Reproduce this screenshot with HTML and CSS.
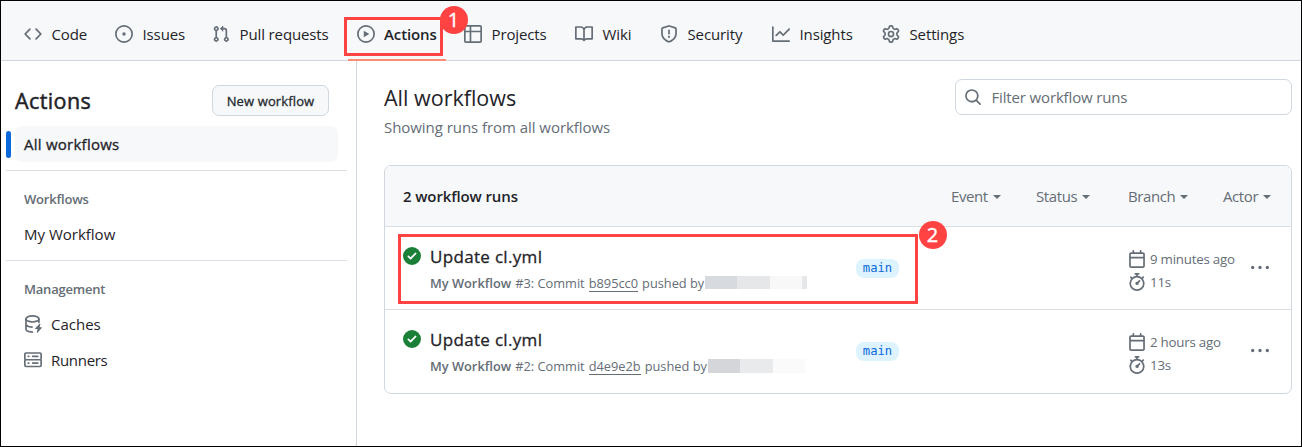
FILE: index.html
```html
<!DOCTYPE html>
<html lang="en">
<head>
<meta charset="utf-8">
<title>Actions</title>
<link rel="stylesheet" href="styles.css">
</head>
<body>
<svg class="defs" aria-hidden="true">
  <symbol id="code" viewBox="0 0 16 16"><path d="M4.72 3.22a.75.75 0 0 1 1.06 1.06L2.06 8l3.72 3.72a.75.75 0 1 1-1.06 1.06L.47 8.53a.75.75 0 0 1 0-1.06Zm6.56 0a.75.75 0 1 0-1.06 1.06L13.94 8l-3.72 3.72a.75.75 0 1 0 1.06 1.06l4.25-4.25a.75.75 0 0 0 0-1.06Z"/></symbol>
  <symbol id="issue" viewBox="0 0 16 16"><path d="M8 9.5a1.5 1.5 0 1 0 0-3 1.5 1.5 0 0 0 0 3Z"/><path d="M8 0a8 8 0 1 1 0 16A8 8 0 0 1 8 0ZM1.5 8a6.5 6.5 0 1 0 13 0 6.5 6.5 0 0 0-13 0Z"/></symbol>
  <symbol id="pr" viewBox="0 0 16 16"><path d="M1.5 3.25a2.25 2.25 0 1 1 3 2.122v5.256a2.251 2.251 0 1 1-1.5 0V5.372A2.25 2.25 0 0 1 1.5 3.25Zm5.677-.177L9.573.677A.25.25 0 0 1 10 .854V2.5h1A2.5 2.5 0 0 1 13.5 5v5.628a2.251 2.251 0 1 1-1.5 0V5a1 1 0 0 0-1-1h-1v1.646a.25.25 0 0 1-.427.177L7.177 3.427a.25.25 0 0 1 0-.354ZM3.75 2.5a.75.75 0 1 0 0 1.5.75.75 0 0 0 0-1.5Zm0 9.5a.75.75 0 1 0 0 1.5.75.75 0 0 0 0-1.5Zm8.25.75a.75.75 0 1 0 1.5 0 .75.75 0 0 0-1.5 0Z"/></symbol>
  <symbol id="play" viewBox="0 0 16 16"><path d="M8 0a8 8 0 1 1 0 16A8 8 0 0 1 8 0ZM1.5 8a6.5 6.5 0 1 0 13 0 6.5 6.5 0 0 0-13 0Zm4.879-2.773 4.264 2.559a.25.25 0 0 1 0 .428l-4.264 2.559A.25.25 0 0 1 6 10.559V5.442a.25.25 0 0 1 .379-.215Z"/></symbol>
  <symbol id="table" viewBox="0 0 16 16"><path d="M0 1.75C0 .784.784 0 1.75 0h12.5C15.216 0 16 .784 16 1.75v12.5A1.75 1.75 0 0 1 14.25 16H1.75A1.75 1.75 0 0 1 0 14.25ZM6.5 6.5v8h7.75a.25.25 0 0 0 .25-.25V6.5Zm8-1.5V1.75a.25.25 0 0 0-.25-.25H6.5V5Zm-13 1.5v7.75c0 .138.112.25.25.25H5v-8ZM5 5V1.5H1.75a.25.25 0 0 0-.25.25V5Z"/></symbol>
  <symbol id="book" viewBox="0 0 16 16"><path d="M0 1.75A.75.75 0 0 1 .75 1h4.253c1.227 0 2.317.59 3 1.501A3.743 3.743 0 0 1 11.006 1h4.245a.75.75 0 0 1 .75.75v10.5a.75.75 0 0 1-.75.75h-4.507a2.25 2.25 0 0 0-1.591.659l-.622.621a.75.75 0 0 1-1.06 0l-.622-.621A2.25 2.25 0 0 0 5.258 13H.75a.75.75 0 0 1-.75-.75Zm7.251 10.324.004-5.073-.002-2.253A2.25 2.25 0 0 0 5.003 2.5H1.5v9h3.757a3.75 3.75 0 0 1 1.994.574ZM8.755 4.75l-.004 7.322a3.752 3.752 0 0 1 1.992-.572H14.5v-9h-3.495a2.25 2.25 0 0 0-2.25 2.25Z"/></symbol>
  <symbol id="shield" viewBox="0 0 16 16"><path d="M7.467.133a1.748 1.748 0 0 1 1.066 0l5.25 1.68A1.75 1.75 0 0 1 15 3.48V7c0 1.566-.32 3.182-1.303 4.682-.983 1.498-2.585 2.813-5.032 3.855a1.697 1.697 0 0 1-1.33 0c-2.447-1.042-4.049-2.357-5.032-3.855C1.32 10.182 1 8.566 1 7V3.48a1.75 1.75 0 0 1 1.217-1.667Zm.61 1.429a.25.25 0 0 0-.153 0l-5.25 1.68a.25.25 0 0 0-.174.238V7c0 1.358.275 2.666 1.057 3.86.784 1.194 2.121 2.34 4.366 3.297a.196.196 0 0 0 .154 0c2.245-.956 3.582-2.104 4.366-3.298C13.225 9.666 13.5 8.36 13.5 7V3.48a.251.251 0 0 0-.174-.237l-5.25-1.68ZM8.75 4.75v3a.75.75 0 0 1-1.5 0v-3a.75.75 0 0 1 1.5 0ZM9 10.5a1 1 0 1 1-2 0 1 1 0 0 1 2 0Z"/></symbol>
  <symbol id="graph" viewBox="0 0 16 16"><path d="M1.5 1.75V13.5h13.75a.75.75 0 0 1 0 1.5H.75a.75.75 0 0 1-.75-.75V1.75a.75.75 0 0 1 1.5 0Zm14.28 2.53-5.25 5.25a.75.75 0 0 1-1.06 0L7 7.06 4.28 9.78a.75.75 0 0 1-1.06-1.06l3.25-3.25a.75.75 0 0 1 1.06 0L10 7.94l4.72-4.72a.75.75 0 1 1 1.06 1.06Z"/></symbol>
  <symbol id="gear" viewBox="0 0 16 16"><path d="M8 0a8.2 8.2 0 0 1 .701.031C9.444.095 9.99.645 10.16 1.29l.288 1.107c.018.066.079.158.212.224.231.114.454.243.668.386.123.082.233.09.299.071l1.103-.303c.644-.176 1.392.021 1.82.63.27.385.506.792.704 1.218.315.675.111 1.422-.364 1.891l-.814.806c-.049.048-.098.147-.088.294.016.257.016.515 0 .772-.01.147.038.246.088.294l.814.806c.475.469.679 1.216.364 1.891a7.977 7.977 0 0 1-.704 1.217c-.428.61-1.176.807-1.82.63l-1.102-.302c-.067-.019-.177-.011-.3.071a5.909 5.909 0 0 1-.668.386c-.133.066-.194.158-.211.224l-.29 1.106c-.168.646-.715 1.196-1.458 1.26a8.006 8.006 0 0 1-1.402 0c-.743-.064-1.289-.614-1.458-1.26l-.289-1.106c-.018-.066-.079-.158-.212-.224a5.738 5.738 0 0 1-.668-.386c-.123-.082-.233-.09-.299-.071l-1.103.303c-.644.176-1.392-.021-1.82-.63a8.12 8.12 0 0 1-.704-1.218c-.315-.675-.111-1.422.363-1.891l.815-.806c.05-.048.098-.147.088-.294a6.214 6.214 0 0 1 0-.772c.01-.147-.038-.246-.088-.294l-.815-.806C.635 6.045.431 5.298.746 4.623a7.92 7.92 0 0 1 .704-1.217c.428-.61 1.176-.807 1.82-.63l1.102.302c.067.019.177.011.3-.071.214-.143.437-.272.668-.386.133-.066.194-.158.211-.224l.29-1.106C6.009.645 6.556.095 7.299.03 7.53.01 7.764 0 8 0Zm-.571 1.525c-.036.003-.108.036-.137.146l-.289 1.105c-.147.561-.549.967-.998 1.189-.173.086-.34.183-.5.29-.417.278-.97.423-1.529.27l-1.103-.303c-.109-.03-.175.016-.195.045-.22.312-.412.644-.573.99-.014.031-.021.11.059.19l.815.806c.411.406.562.957.53 1.456a4.709 4.709 0 0 0 0 .582c.032.499-.119 1.05-.53 1.456l-.815.806c-.081.08-.073.159-.059.19.162.346.353.677.573.989.02.03.085.076.195.046l1.102-.303c.56-.153 1.113-.008 1.53.27.161.107.328.204.501.29.447.222.85.629.997 1.189l.289 1.105c.029.109.101.143.137.146a6.6 6.6 0 0 0 1.142 0c.036-.003.108-.036.137-.146l.289-1.105c.147-.561.549-.967.998-1.189.173-.086.34-.183.5-.29.417-.278.97-.423 1.529-.27l1.103.303c.109.029.175-.016.195-.045.22-.313.411-.644.573-.99.014-.031.021-.11-.059-.19l-.815-.806c-.411-.406-.562-.957-.53-1.456a4.709 4.709 0 0 0 0-.582c-.032-.499.119-1.05.53-1.456l.815-.806c.081-.08.073-.159.059-.19a6.464 6.464 0 0 0-.573-.989c-.02-.03-.085-.076-.195-.046l-1.102.303c-.56.153-1.113.008-1.53-.27a4.44 4.44 0 0 0-.501-.29c-.447-.222-.85-.629-.997-1.189l-.289-1.105c-.029-.11-.101-.143-.137-.146a6.6 6.6 0 0 0-1.142 0ZM11 8a3 3 0 1 1-6 0 3 3 0 0 1 6 0ZM9.5 8a1.5 1.5 0 1 0-3.001.001A1.5 1.5 0 0 0 9.5 8Z"/></symbol>
  <symbol id="search" viewBox="0 0 16 16"><path d="M10.68 11.74a6 6 0 0 1-7.922-8.982 6 6 0 0 1 8.982 7.922l3.04 3.04a.749.749 0 0 1-1.06 1.06ZM11.5 7a4.499 4.499 0 1 0-8.997 0A4.499 4.499 0 0 0 11.5 7Z"/></symbol>
  <symbol id="check" viewBox="0 0 16 16"><path d="M8 16A8 8 0 1 1 8 0a8 8 0 0 1 0 16Zm3.78-9.72a.751.751 0 0 0-1.06-1.06L6.75 9.19 5.28 7.72a.751.751 0 0 0-1.06 1.06l2 2a.75.75 0 0 0 1.06 0Z"/></symbol>
  <symbol id="calendar" viewBox="0 0 16 16"><path d="M4.75 0a.75.75 0 0 1 .75.75V2h5V.75a.75.75 0 0 1 1.5 0V2h1.25c.966 0 1.75.784 1.75 1.75v10.5A1.75 1.75 0 0 1 13.25 16H2.75A1.75 1.75 0 0 1 1 14.25V3.75C1 2.784 1.784 2 2.75 2H4V.75A.75.75 0 0 1 4.75 0ZM2.5 7.5v6.75c0 .138.112.25.25.25h10.5a.25.25 0 0 0 .25-.25V7.5Zm10.75-4H2.75a.25.25 0 0 0-.25.25V6h11V3.75a.25.25 0 0 0-.25-.25Z"/></symbol>
  <symbol id="watch" viewBox="0 0 16 16"><path d="M5.75.75A.75.75 0 0 1 6.5 0h3a.75.75 0 0 1 0 1.5h-.75v1l-.001.041a6.724 6.724 0 0 1 3.464 1.435l.007-.006.75-.75a.749.749 0 0 1 1.06 1.06l-.75.75-.006.007a6.75 6.75 0 1 1-10.548 0L2.72 5.03l-.75-.75a.751.751 0 0 1 1.06-1.06l.75.75.007.006A6.72 6.72 0 0 1 7.25 2.541V1.5H6.5a.75.75 0 0 1-.75-.75ZM8 14.5a5.25 5.25 0 1 0 0-10.5 5.25 5.25 0 0 0 0 10.5Zm.389-6.7 1.33-1.33a.75.75 0 1 1 1.061 1.06L9.45 8.861A1.503 1.503 0 0 1 8 10.75a1.499 1.499 0 1 1 .389-2.95Z"/></symbol>
  <symbol id="dots" viewBox="0 0 16 16"><path d="M8 9a1.5 1.5 0 1 0 0-3 1.5 1.5 0 0 0 0 3ZM1.5 9a1.5 1.5 0 1 0 0-3 1.5 1.5 0 0 0 0 3Zm13 0a1.5 1.5 0 1 0 0-3 1.5 1.5 0 0 0 0 3Z"/></symbol>
  <symbol id="cache" viewBox="0 0 16 16"><g fill="none" stroke="currentColor" stroke-width="1.5" stroke-linecap="round"><ellipse cx="7.5" cy="3.5" rx="5.75" ry="2.7"/><path d="M1.75 3.5v9c0 1.5 2.3 2.65 5.75 2.75M13.25 3.5v3M1.75 8c0 1.4 2 2.5 5.5 2.7"/></g><path d="m14 7.6-4 4.2c-.3.3-.1.7.3.7h1.7l-.6 3.1c0 .4.3.5.6.2l3.8-4.2c.3-.3.1-.7-.3-.7h-1.6l.6-3c.1-.4-.2-.6-.5-.3Z"/></symbol>
  <symbol id="server" viewBox="0 0 16 16"><path d="M1.75 1h12.5c.966 0 1.75.784 1.75 1.75v4c0 .372-.116.717-.314 1 .198.283.314.628.314 1v4a1.75 1.75 0 0 1-1.75 1.75H1.75A1.75 1.75 0 0 1 0 12.75v-4c0-.358.109-.707.314-1a1.739 1.739 0 0 1-.314-1v-4C0 1.784.784 1 1.75 1ZM1.5 2.75v4c0 .138.112.25.25.25h12.5a.25.25 0 0 0 .25-.25v-4a.25.25 0 0 0-.25-.25H1.75a.25.25 0 0 0-.25.25Zm.25 5.75a.25.25 0 0 0-.25.25v4c0 .138.112.25.25.25h12.5a.25.25 0 0 0 .25-.25v-4a.25.25 0 0 0-.25-.25ZM7 4.75A.75.75 0 0 1 7.75 4h4.5a.75.75 0 0 1 0 1.5h-4.5A.75.75 0 0 1 7 4.75ZM7.75 10h4.5a.75.75 0 0 1 0 1.5h-4.5a.75.75 0 0 1 0-1.5ZM3 4.75A.75.75 0 0 1 3.75 4h.5a.75.75 0 0 1 0 1.5h-.5A.75.75 0 0 1 3 4.75ZM3.75 10h.5a.75.75 0 0 1 0 1.5h-.5a.75.75 0 0 1 0-1.5Z"/></symbol>
</svg>
<div class="page">
  <nav class="nav">
    <a class="tab tab-code"><svg class="icon"><use href="#code"/></svg><span>Code</span></a>
    <a class="tab tab-issues"><svg class="icon"><use href="#issue"/></svg><span>Issues</span></a>
    <a class="tab tab-pulls"><svg class="icon"><use href="#pr"/></svg><span>Pull requests</span></a>
    <a class="tab tab-actions"><svg class="icon"><use href="#play"/></svg><span>Actions</span></a>
    <a class="tab tab-projects"><svg class="icon"><use href="#table"/></svg><span>Projects</span></a>
    <a class="tab tab-wiki"><svg class="icon"><use href="#book"/></svg><span>Wiki</span></a>
    <a class="tab tab-security"><svg class="icon"><use href="#shield"/></svg><span>Security</span></a>
    <a class="tab tab-insights"><svg class="icon"><use href="#graph"/></svg><span>Insights</span></a>
    <a class="tab"><svg class="icon"><use href="#gear"/></svg><span>Settings</span></a>
  </nav>
  <div class="body">
    <aside class="sidebar">
      <div class="side-head"><h2>Actions</h2><button class="new">New workflow</button></div>
      <div class="current"><i class="bar"></i><a class="all">All workflows</a></div>
      <section class="group">
        <h3>Workflows</h3>
        <a class="link">My Workflow</a>
      </section>
      <section class="group">
        <h3>Management</h3>
        <a class="link"><svg class="icon"><use href="#cache"/></svg><span>Caches</span></a>
        <a class="link"><svg class="icon"><use href="#server"/></svg><span class="runners">Runners</span></a>
      </section>
    </aside>
    <main class="main">
      <header class="top">
        <div><h1>All workflows</h1><p class="sub">Showing runs from all workflows</p></div>
        <div class="search"><svg class="icon"><use href="#search"/></svg><span>Filter workflow runs</span></div>
      </header>
      <div class="table">
        <div class="thead">
          <strong>2 workflow runs</strong>
          <span class="filter f-event">Event<i class="caret"></i></span>
          <span class="filter f-status">Status<i class="caret"></i></span>
          <span class="filter f-branch">Branch<i class="caret"></i></span>
          <span class="filter f-actor">Actor<i class="caret"></i></span>
        </div>
        <div class="row">
          <svg class="icon ok"><use href="#check"/></svg>
          <div class="run">
            <h4>Update cl.yml</h4>
            <p class="meta"><b>My Workflow</b> <span>#3: Commit</span> <u>b895cc0</u> <span>pushed by</span><i class="redact r1"></i></p>
          </div>
          <div class="branch"><span class="pill">main</span></div>
          <div class="times">
            <div><svg class="icon"><use href="#calendar"/></svg><span>9 minutes ago</span></div>
            <div><svg class="icon"><use href="#watch"/></svg><span>11s</span></div>
          </div>
          <svg class="icon kebab"><use href="#dots"/></svg>
        </div>
        <div class="row">
          <svg class="icon ok"><use href="#check"/></svg>
          <div class="run">
            <h4>Update cl.yml</h4>
            <p class="meta"><b>My Workflow</b> <span>#2: Commit</span> <u>d4e9e2b</u> <span>pushed by</span><i class="redact r2"></i></p>
          </div>
          <div class="branch"><span class="pill">main</span></div>
          <div class="times">
            <div><svg class="icon"><use href="#calendar"/></svg><span>2 hours ago</span></div>
            <div><svg class="icon"><use href="#watch"/></svg><span>13s</span></div>
          </div>
          <svg class="icon kebab"><use href="#dots"/></svg>
        </div>
      </div>
    </main>
  </div>
  <div class="box box1"></div><div class="badge badge1">1</div>
  <div class="box box2"></div><div class="badge badge2">2</div>
</div>
</body>
</html>
```

FILE: styles.css
```css
* { box-sizing: border-box; }
body { margin: 0; background: #fff; color: #1f2328; font: 15px/22px "Open Sans", "Noto Sans", sans-serif; white-space: nowrap; }
h1, h2, h3, h4, p { margin: 0; font-weight: 400; }
.defs { position: absolute; width: 0; height: 0; }
.icon { width: 18px; height: 18px; fill: currentColor; color: #656d76; flex: none; display: block; }
.page { position: relative; width: 1302px; height: 447px; border: 1px solid #000; display: flex; flex-direction: column; overflow: hidden; }

.nav { height: 60px; flex: none; display: flex; background: #f6f8fa; border-bottom: 1px solid #d0d7de; padding: 7px 0 0 23px; }
.tab { display: flex; align-items: center; gap: 9.5px; height: 53px; padding-bottom: 1px; flex: none; letter-spacing: -0.12px; }
.tab-code { width: 91px; }
.tab-issues { width: 97px; }
.tab-pulls { width: 145px; }
.tab-actions { width: 116px; margin-left: -9px; padding-left: 9px; gap: 9px; font-weight: 600; background: linear-gradient(#fd8c73, #fd8c73) 0 51px / 98px 2px no-repeat; }
.tab-projects { width: 111px; }
.tab-wiki { width: 85px; }
.tab-security { width: 112px; }
.tab-insights { width: 110px; }

.body { flex: 1; display: flex; }
.sidebar { width: 356px; flex: none; border-right: 1px solid #d0d7de; padding: 24px 9px 0 5px; }
.side-head { display: flex; justify-content: space-between; height: 32px; padding: 0 18px 0 9px; }
.side-head h2 { font-size: 21.5px; line-height: 32px; letter-spacing: 0.4px; -webkit-text-stroke: 0.5px; }
.new { width: 117px; height: 31px; padding: 0; border: 1px solid #d0d7de; border-radius: 7px; background: #f6f8fa; color: #24292f; font: 13px/28px "Open Sans", "Noto Sans", sans-serif; letter-spacing: 0.12px; -webkit-text-stroke: 0.3px; }
.current { display: flex; align-items: center; gap: 4px; margin-top: 9px; height: 36px; }
.bar { width: 5px; height: 27px; border-radius: 3px; background: #0969da; }
.all { width: 323px; height: 36px; padding-left: 9px; border-radius: 7px; background: #f6f8fa; line-height: 36px; letter-spacing: 0.25px; -webkit-text-stroke: 0.3px; }
.group { height: 90px; margin-top: 8px; border-top: 1px solid #d8dee4; padding: 18px 0 0 18px; }
.group + .group { margin-top: 0; }
.group h3 { margin-bottom: 7px; font-size: 13px; font-weight: 600; color: #656d76; line-height: 20px; letter-spacing: -0.2px; }
.link { display: flex; align-items: center; gap: 9px; height: 36px; }
.runners { letter-spacing: -0.3px; }

.main { flex: 1; padding: 18px 9px 0 27px; }
.top { display: flex; justify-content: space-between; height: 86px; }
.top h1 { font-size: 21.5px; line-height: 36px; margin-top: 1px; }
.sub { color: #656d76; line-height: 22px; letter-spacing: -0.05px; }
.search { width: 337px; height: 36px; display: flex; align-items: center; gap: 9.5px; padding-left: 8px; border: 1px solid #d0d7de; border-radius: 7px; color: #656d76; letter-spacing: -0.15px; }
.table { border: 1px solid #d0d7de; border-radius: 7px; height: 229px; overflow: hidden; }
.thead { height: 60px; display: flex; align-items: center; background: #f6f8fa; padding-left: 18px; color: #656d76; }
.thead strong { width: 548px; font-weight: 600; color: #1f2328; letter-spacing: -0.12px; }
.filter { display: flex; align-items: center; gap: 5px; letter-spacing: -0.4px; }
.f-event { width: 85px; }
.f-status { width: 92px; }
.f-branch { width: 95px; }
.caret { border: 4px solid transparent; border-top-color: currentColor; border-bottom: 0; margin-top: 2px; }
.row { display: flex; height: 83px; border-top: 1px solid #d8dee4; padding-left: 18px; color: #656d76; }
.ok { color: #1a7f37; margin-top: 20px; }
.run { width: 426px; padding: 17px 0 0 9px; }
.run h4 { font-size: 17px; line-height: 26px; color: #1f2328; letter-spacing: 0.32px; -webkit-text-stroke: 0.3px; }
.meta { display: flex; gap: 4px; font-size: 12.8px; line-height: 18px; padding-top: 4px; }
.meta b { font-weight: 600; }
.meta u { text-decoration: none; border-bottom: 1px solid #656d76; height: 18px; }
.redact { height: 13px; width: 102px; margin: 2px 0 0 -3px; }
.r1 { margin-left: 1px; background: linear-gradient(90deg, #d7dbdf 32px, #e6e7e9 32px 65px, #f8f8f8 65px 97px, #e6e7e9 97px); }
.r1, .r2 { margin-left: -3px; }
.r2 { height: 14px; width: 97px; background: linear-gradient(90deg, #d5d6da 32px, #e9eaeb 32px 65px, #fafafa 65px); }
.branch { width: 281px; padding: 32px 0 0 9px; }
.pill { display: block; width: 43px; height: 19px; border-radius: 8px; background: #ddf4ff; color: #0969da; font: 12.2px/19px "DejaVu Sans Mono", "Liberation Mono", monospace; text-align: center; }
.times { width: 114px; padding-top: 21px; font-size: 13.3px; letter-spacing: -0.22px; }
.times div { display: flex; align-items: center; gap: 4px; height: 24px; margin-top: -1px; }
.kebab { margin: 32px 0 0 9px; }

.box { position: absolute; border: 3px solid #ff4343; }
.box1 { left: 343px; top: 16px; width: 99px; height: 39px; }
.box2 { left: 397px; top: 233px; width: 520px; height: 70px; }
.badge { position: absolute; width: 28px; height: 28px; border-radius: 50%; background: #ff4343; color: #fff; font-size: 20px; line-height: 28px; text-align: center; -webkit-text-stroke: 0.4px; }
.badge1 { left: 438.5px; top: 4.5px; }
.badge2 { left: 917.5px; top: 219.5px; }
```
